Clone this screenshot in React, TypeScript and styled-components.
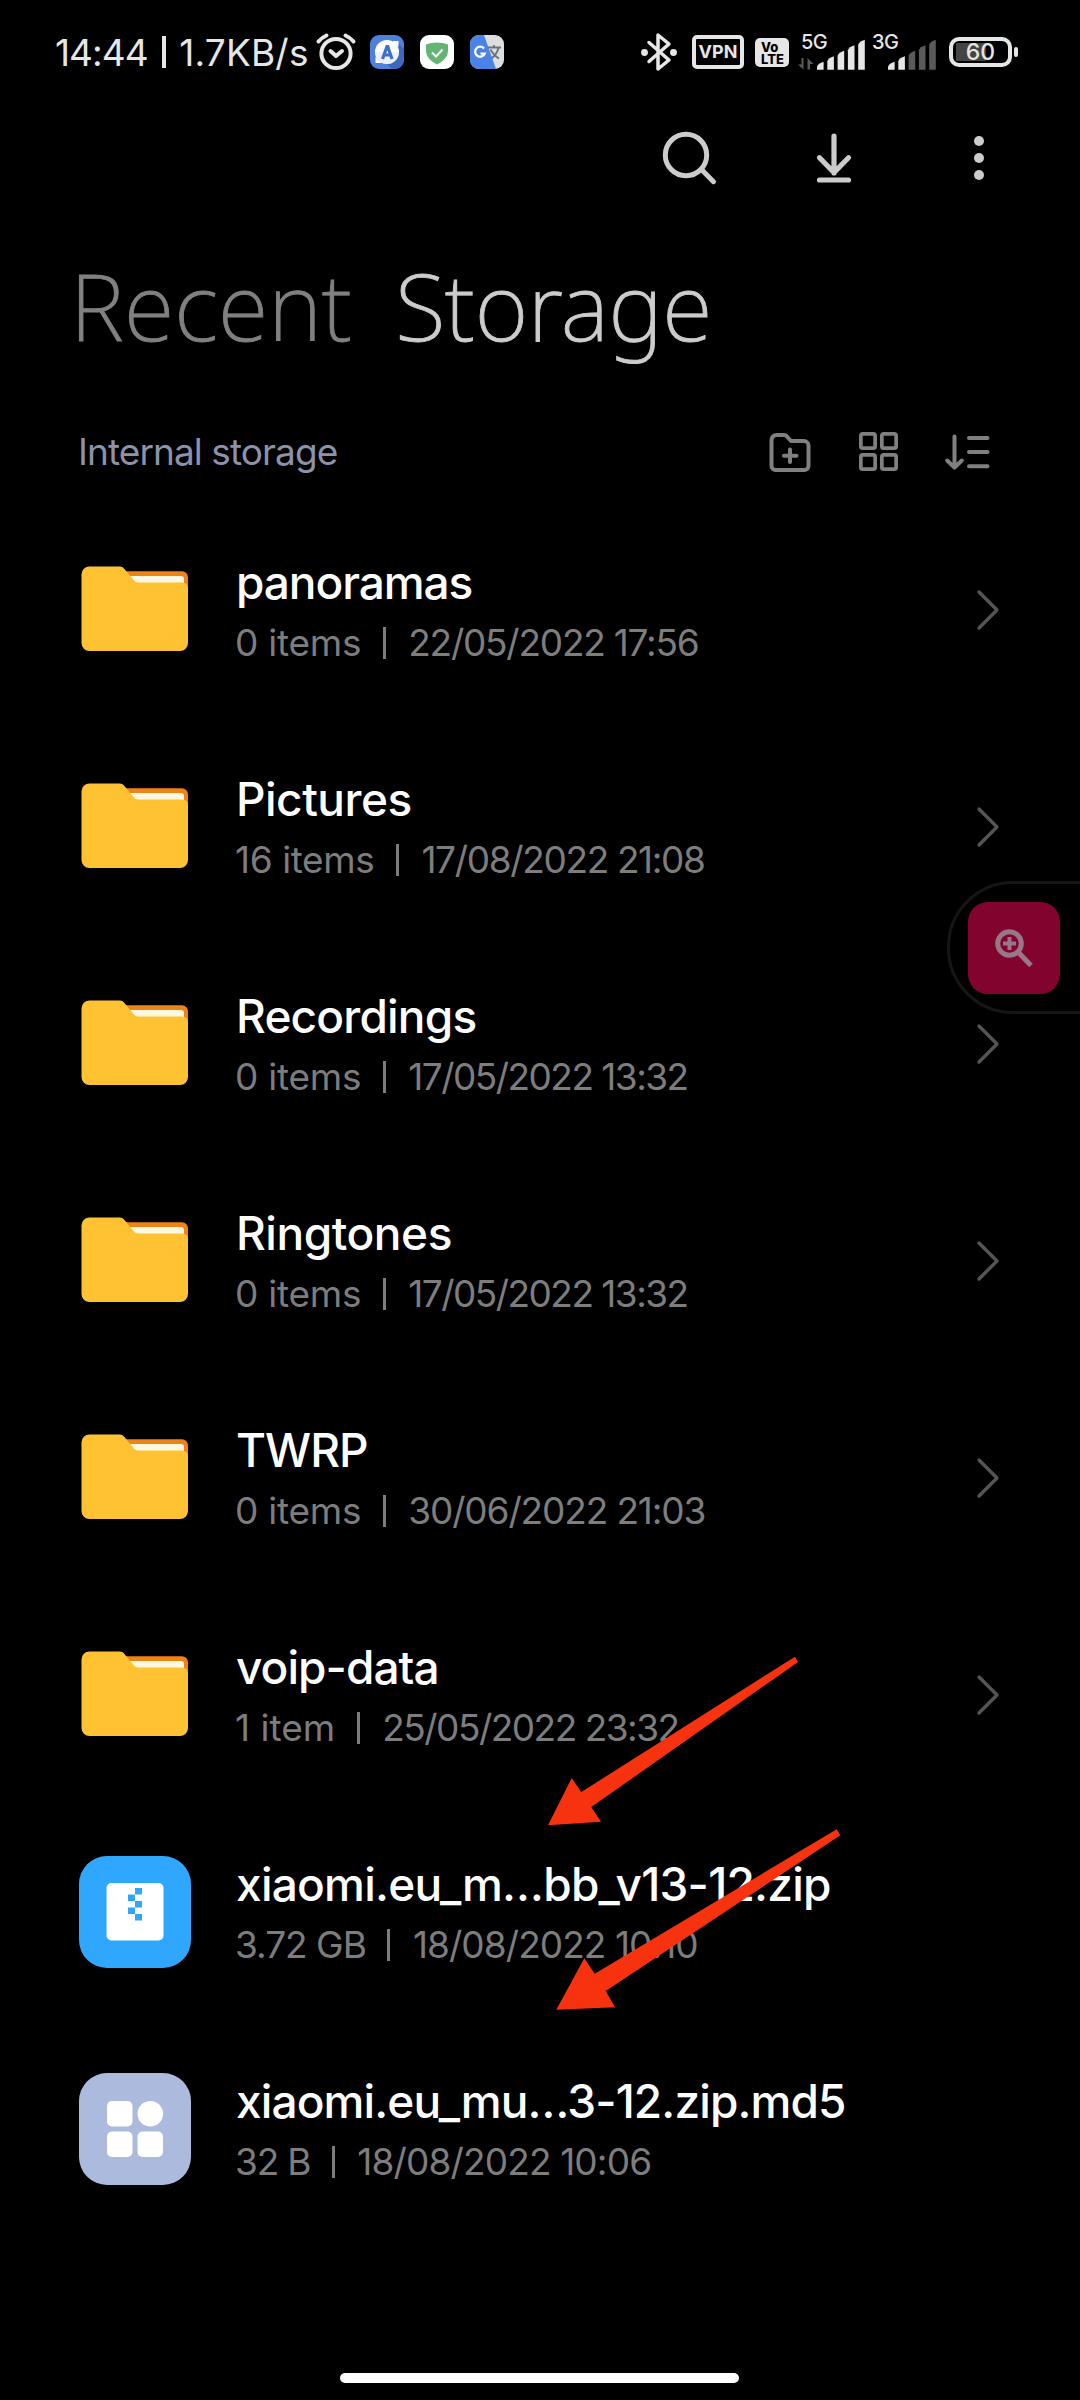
import React from 'react';
import styled, { createGlobalStyle } from 'styled-components';

const UI = '"Inter", "Roboto", sans-serif';

const GlobalStyle = createGlobalStyle`
  * { box-sizing: border-box; }
  body { margin: 0; background: #000; }
  svg { display: block; flex: none; overflow: visible; }
`;

const Screen = styled.main`
  position: relative;
  display: flex;
  flex-direction: column;
  width: 1080px;
  height: 2400px;
  overflow: hidden;
  background: #000;
  color: #fff;
  font-family: ${UI};
  white-space: nowrap;
`;

/* Status bar */
const StatusBar = styled.header`
  display: flex;
  align-items: center;
  justify-content: space-between;
  height: 104px;
  padding: 0 62px 0 55px;
  color: #e6e6e6;
`;
const StatusGroup = styled.div`
  display: flex;
  align-items: center;
`;
const StatusText = styled.span<{ $track: number }>`
  padding-top: 1px;
  font-size: 37px;
  font-weight: 430;
  line-height: 44px;
  letter-spacing: ${p => p.$track}px;
`;
const Divider = styled.i<{ $color: string; $before: number; $after: number; $thick?: number }>`
  flex: none;
  width: ${p => p.$thick ?? 3}px;
  height: 32px;
  margin: 0 ${p => p.$after}px 0 ${p => p.$before}px;
  background: ${p => p.$color};
`;
const Spaced = styled.div<{ $left: number }>`
  margin-left: ${p => p.$left}px;
`;
const VpnBadge = styled.span`
  display: flex;
  align-items: center;
  justify-content: center;
  width: 52px;
  height: 34px;
  margin-left: 15px;
  border: 4px solid #e6e6e6;
  border-radius: 5px;
  font-size: 18px;
  font-weight: 700;
  line-height: 1;
`;
const VolteBadge = styled.span`
  display: flex;
  flex-direction: column;
  width: 34px;
  height: 29px;
  margin-left: 11px;
  padding: 3px 0 0 6px;
  border-radius: 5px;
  background: #e6e6e6;
  color: #000;
  font-size: 13px;
  font-weight: 800;
  line-height: 12px;
`;
const SignalBox = styled.div<{ $left: number }>`
  display: grid;
  height: 36px;
  margin-left: ${p => p.$left}px;
  > * { grid-area: 1 / 1; }
`;
const SignalLabel = styled.span<{ $indent: number }>`
  padding-left: ${p => p.$indent}px;
  font-size: 20px;
  font-weight: 500;
  line-height: 17px;
  letter-spacing: -0.5px;
`;
const Battery = styled.div`
  display: flex;
  align-items: center;
  margin-left: 14px;
`;
const BatteryShell = styled.span`
  display: flex;
  align-items: center;
  justify-content: center;
  width: 63px;
  height: 30px;
  border: 4px solid #e6e6e6;
  border-radius: 10px;
  background: linear-gradient(90deg, #444 62%, transparent 62%) 3px 2px / 49px 18px no-repeat;
  font-size: 23px;
  font-weight: 500;
  line-height: 1;
`;
const BatteryTip = styled.i`
  width: 4px;
  height: 10px;
  margin-left: 2px;
  border-radius: 2px;
  background: #e6e6e6;
`;

/* Header */
const Toolbar = styled.div`
  display: flex;
  align-items: center;
  justify-content: flex-end;
  gap: 98px;
  height: 108px;
  padding-right: 71px;
  > :first-child { margin-right: 3px; }
`;
const Tabs = styled.nav`
  display: flex;
  align-items: center;
  height: 188px;
  padding-left: 70px;
`;
const Tab = styled.span<{ $active?: boolean; $track: number; $left?: number }>`
  margin-left: ${p => p.$left ?? 0}px;
  font-family: "Noto Sans", sans-serif;
  font-size: 92px;
  font-weight: 250;
  line-height: 120px;
  letter-spacing: ${p => p.$track}px;
  color: ${p => (p.$active ? '#cccccc' : '#808080')};
  -webkit-text-stroke: 0.9px currentColor;
`;
const PathBar = styled.div`
  display: flex;
  align-items: center;
  justify-content: space-between;
  height: 100px;
  padding: 3px 90px 0 78px;
`;
const PathName = styled.span`
  font-size: 37px;
  font-weight: 380;
  line-height: 44px;
  letter-spacing: -0.92px;
  color: #8d92ab;
`;
const ViewTools = styled.div`
  display: flex;
  align-items: center;
  gap: 47.5px;
`;

/* File list */
const List = styled.ul`
  display: grid;
  grid-auto-rows: 217px;
  margin: 0;
  padding: 0 79px 0 79px;
  list-style: none;
`;
const Row = styled.li`
  display: grid;
  grid-template-columns: 112px 1fr 24px;
  column-gap: 44px;
  align-items: start;
  padding-top: 54px;
`;
const Info = styled.div`
  display: flex;
  flex-direction: column;
  gap: 12px;
`;
const Name = styled.span<{ $track: number }>`
  padding-left: 1px;
  font-size: 46px;
  font-weight: 500;
  line-height: 56px;
  letter-spacing: ${p => p.$track}px;
`;
const Meta = styled.div`
  display: flex;
  align-items: center;
  height: 42px;
  color: #7d7d7d;
`;
const MetaText = styled.span<{ $track: number }>`
  font-size: 37px;
  font-weight: 375;
  line-height: 42px;
  letter-spacing: ${p => p.$track}px;
`;

/* Overlays */
const SideDock = styled.div`
  position: absolute;
  top: 881px;
  right: -4px;
  display: flex;
  align-items: center;
  width: 137px;
  height: 133px;
  padding-left: 18px;
  border: 3px solid #161616;
  border-radius: 66px 0 0 66px;
  background: #000;
`;
const DockButton = styled.span`
  display: flex;
  align-items: center;
  justify-content: center;
  width: 92px;
  height: 92px;
  border-radius: 20px;
  background: #83032f;
`;
const Markup = styled.svg`
  position: absolute;
  inset: 0;
  pointer-events: none;
`;
const HomeIndicator = styled.i`
  width: 399px;
  height: 10px;
  margin: auto auto 17px 340px;
  border-radius: 5px;
  background: #fff;
`;

const AlarmIcon = () => (
  <svg width="40" height="38" viewBox="0 0 40 38" fill="none" stroke="#e6e6e6" strokeWidth="4" strokeLinecap="round" strokeLinejoin="round">
    <circle cx="20" cy="20.5" r="14.6" />
    <path d="M14.5 18l5.5 5 6-5M2.5 8.5C5 5.5 7 4 10.500 2.500M37.500 8.500C35 5.500 33 4 29.500 2.500" />
  </svg>
);
const AssistIcon = () => (
  <svg width="34" height="34" viewBox="0 0 34 34">
    <rect width="34" height="34" rx="9" fill="#4e80dc" />
    <path d="M17 29L22 34H25A9 9 0 0 0 34 25V14L27 7z" fill="#3d69bd" />
    <circle cx="17" cy="17" r="12" fill="#fff" />
    <path d="M5.500 22v6h6zM28.500 12V6h-6z" fill="#fff" />
    <path d="M5 17a12 12 0 0 0 24 0z" fill="#dfe7f7" opacity="0.6" />
    <path d="M12.500 24L17 11.500h.8L22 24M14 20h7" fill="none" stroke="#3f6fcb" strokeWidth="3.200" />
  </svg>
);
const ShieldIcon = () => (
  <svg width="34" height="34" viewBox="0 0 34 34">
    <rect width="34" height="34" rx="9" fill="#fff" />
    <path d="M17 7.500c4 0 7.500.8 11 2v6c0 6.500-5 11-11 14-6-3-11-7.500-11-14v-6c3.500-1.200 7-2 11-2z" fill="#63b574" />
    <path d="M12 17.500l4 4 6.500-7" fill="none" stroke="#fff" strokeWidth="2" />
  </svg>
);
const TranslateIcon = () => (
  <svg width="34" height="34" viewBox="0 0 34 34">
    <rect width="34" height="34" rx="9" fill="#dedede" />
    <path d="M9 0h5l12 34H9a9 9 0 0 1-9-9V9a9 9 0 0 1 9-9z" fill="#4a83e6" />
    <path d="M14 13.500a5 5 0 1 0 .8 5H10.500" fill="none" stroke="#fff" strokeWidth="2.200" />
    <path d="M18 12.500h13M24 10v2.500M28.500 13c-1 4-4 8-7 10.500M20.500 14.500c2 3.500 5 7 8.500 9" fill="none" stroke="#66727a" strokeWidth="1.800" />
  </svg>
);
const BluetoothIcon = () => (
  <svg width="36" height="38" viewBox="0 0 36 38" fill="none" stroke="#e6e6e6" strokeWidth="3.500" strokeLinejoin="round" strokeLinecap="round">
    <path d="M8 9.500L28 27 17 36V2l11 9L8 28.500" />
    <circle cx="3.500" cy="19.500" r="1.700" fill="#e6e6e6" />
    <circle cx="32.500" cy="19.500" r="1.700" fill="#e6e6e6" />
  </svg>
);
function Signal({ label, level, data, left }: { label: string; level: number; data?: boolean; left: number }) {
  const x0 = data ? 19 : 16;
  return (
    <SignalBox $left={left}>
      <svg width={data ? 67 : 63} height="36" viewBox={`0 0 ${data ? 67 : 63} 36`}>
        {data && <path d="M5.500 24v11.500L0 30.500h3.500V24zM9.500 35.500V24l6 6h-3.500v5.500z" fill="#5a5a5a" />}
        {[8, 13.5, 19, 24.5, 30].map((h, i) => (
          <path
            key={h}
            transform={`translate(${x0 + i * 10.3} ${35.7 - h})`}
            d={`M0 5Q1 1.500 6.600 0V${h}H0z`}
            fill={i < level ? '#e6e6e6' : '#5a5a5a'}
          />
        ))}
      </svg>
      <SignalLabel $indent={data ? 3 : 0}>{label}</SignalLabel>
    </SignalBox>
  );
}

const SearchIcon = () => (
  <svg width="54" height="54" viewBox="0 0 54 54" fill="none" stroke="#ccc" strokeWidth="5" strokeLinecap="round">
    <circle cx="24" cy="24" r="20.700" />
    <path d="M39.500 38.500L51.500 50.700" />
  </svg>
);
const DownloadIcon = () => (
  <svg width="34" height="50" viewBox="0 0 34 50" fill="none" stroke="#ccc" strokeWidth="5.200" strokeLinecap="round" strokeLinejoin="round">
    <path d="M17 3v37M2.500 24.700L17 39.500l14.500-14.800M2.500 47h29" />
  </svg>
);
const MoreIcon = () => (
  <svg width="60" height="44" viewBox="0 0 60 44" fill="#ccc">
    <circle cx="30" cy="5" r="5" /><circle cx="30" cy="22" r="5" /><circle cx="30" cy="39" r="5" />
  </svg>
);
const NewFolderIcon = () => (
  <svg width="42" height="40" viewBox="0 0 42 40" fill="none" stroke="#808080" strokeWidth="4" strokeLinecap="round" strokeLinejoin="round">
    <path d="M2.500 8a5 5 0 0 1 5-5h7.500q1.500 0 2.500 1l4.500 5H35a4.500 4.500 0 0 1 4.500 4.500V34a4 4 0 0 1-4 4h-29a4 4 0 0 1-4-4zM21 17.500v12.500M15 23.700h12.500" />
  </svg>
);
const GridIcon = () => (
  <svg width="39" height="39" viewBox="0 0 39 39" fill="none" stroke="#808080" strokeWidth="3.700">
    <rect x="1.850" y="1.850" width="14.300" height="14.300" rx="2" /><rect x="22.850" y="1.850" width="14.300" height="14.300" rx="2" />
    <rect x="1.850" y="22.850" width="14.300" height="14.300" rx="2" /><rect x="22.850" y="22.850" width="14.300" height="14.300" rx="2" />
  </svg>
);
const SortIcon = () => (
  <svg width="45" height="36" viewBox="0 0 45 36" fill="none" stroke="#808080" strokeWidth="4" strokeLinecap="round" strokeLinejoin="round">
    <path d="M9.500 2.500v31M2.200 26.500L9.500 33.700l7.300-7.200M24 4h18.500M24 18h18.500M24 32.300h18.500" />
  </svg>
);
const FolderIcon = () => (
  <svg width="112" height="112" viewBox="0 0 112 112">
    <path d="M40 17.200h63a6 6 0 0 1 6 6v30H60z" fill="#ee8415" />
    <path d="M48 22h54a3 3 0 0 1 3 3v10H52z" fill="#fff8e0" />
    <path d="M2.500 20.500a8 8 0 0 1 8-8h30.500q2.500 0 4 2l10 12q1.500 2 4 2H103q6 0 6 6V89a8 8 0 0 1-8 8H10.500a8 8 0 0 1-8-8z" fill="#ffc233" />
  </svg>
);
const ZipIcon = () => (
  <svg width="112" height="112" viewBox="0 0 112 112">
    <rect width="112" height="112" rx="28" fill="#30a7ff" />
    <rect x="27.500" y="27" width="57" height="57.500" rx="5" fill="#fff" />
    <path d="M56 32h7v6.500h-7zM49 38.500h7V45h-7zM56 45h7v6.500h-7zM49 51.500h7V58h-7zM56 58h7v6.500h-7z" fill="#30a7ff" />
  </svg>
);
const AppFileIcon = () => (
  <svg width="112" height="112" viewBox="0 0 112 112">
    <rect width="112" height="112" rx="28" fill="#acbadd" />
    <g fill="#fff">
      <rect x="28" y="28" width="25.500" height="25.500" rx="5" /><circle cx="71.300" cy="40.700" r="12.800" />
      <rect x="28" y="58.500" width="25.500" height="25.500" rx="5" /><rect x="58.500" y="58.500" width="25.500" height="25.500" rx="5" />
    </g>
  </svg>
);
const Chevron = () => (
  <svg width="24" height="112" viewBox="0 0 24 112" fill="none" stroke="#555" strokeWidth="3.300" strokeLinecap="round" strokeLinejoin="round">
    <path d="M2 38l18 18-18 18" />
  </svg>
);
const ZoomIcon = () => (
  <svg width="40" height="40" viewBox="0 0 40 40" fill="none" stroke="#96788a" strokeWidth="5">
    <circle cx="15.500" cy="15.500" r="11.800" />
    <path d="M24 24l13 13.500" /><path d="M15.500 9v13M9 15.500h13" strokeWidth="4" />
  </svg>
);

type Kind = 'folder' | 'zip' | 'app';
interface Entry {
  kind: Kind;
  name: string;
  size: string;
  date: string;
  /* letter-spacing of name, size and date */
  track: [number, number, number];
}
const entries: Entry[] = [
  { kind: 'folder', name: 'panoramas', size: '0 items', date: '22/05/2022 17:56', track: [-1.08, -0.25, -1.23] },
  { kind: 'folder', name: 'Pictures', size: '16 items', date: '17/08/2022 21:08', track: [-0.5, -0.4, -1.35] },
  { kind: 'folder', name: 'Recordings', size: '0 items', date: '17/05/2022 13:32', track: [-0.8, -0.25, -1.53] },
  { kind: 'folder', name: 'Ringtones', size: '0 items', date: '17/05/2022 13:32', track: [-0.45, -0.25, -1.53] },
  { kind: 'folder', name: 'TWRP', size: '0 items', date: '30/06/2022 21:03', track: [-1, -0.25, -1.13] },
  { kind: 'folder', name: 'voip-data', size: '1 item', date: '25/05/2022 23:32', track: [-0.95, 0, -1.5] },
  { kind: 'zip', name: 'xiaomi.eu_m…bb_v13-12.zip', size: '3.72 GB', date: '18/08/2022 10:10', track: [-0.75, -1, -0.93] },
  { kind: 'app', name: 'xiaomi.eu_mu…3-12.zip.md5', size: '32 B', date: '18/08/2022 10:06', track: [-0.88, -1.2, -0.85] },
];
const icons: Record<Kind, React.FC> = { folder: FolderIcon, zip: ZipIcon, app: AppFileIcon };

export default function App() {
  return (
    <Screen>
      <GlobalStyle />
      <StatusBar>
        <StatusGroup>
          <StatusText $track={-0.95}>14:44</StatusText>
          <Divider $color="#e6e6e6" $before={14.5} $after={13} $thick={4} />
          <StatusText $track={0.2}>1.7KB/s</StatusText>
          <Spaced $left={7}><AlarmIcon /></Spaced>
          <Spaced $left={14}><AssistIcon /></Spaced>
          <Spaced $left={16}><ShieldIcon /></Spaced>
          <Spaced $left={16}><TranslateIcon /></Spaced>
        </StatusGroup>
        <StatusGroup>
          <BluetoothIcon />
          <VpnBadge>VPN</VpnBadge>
          <VolteBadge><span>Vo</span><span>LTE</span></VolteBadge>
          <Signal label="5G" level={5} data left={9} />
          <Signal label="3G" level={2} left={7} />
          <Battery><BatteryShell>60</BatteryShell><BatteryTip /></Battery>
        </StatusGroup>
      </StatusBar>
      <Toolbar><SearchIcon /><DownloadIcon /><MoreIcon /></Toolbar>
      <Tabs>
        <Tab $track={0.1}>Recent</Tab>
        <Tab $track={-0.35} $left={43} $active>Storage</Tab>
      </Tabs>
      <PathBar>
        <PathName>Internal storage</PathName>
        <ViewTools><NewFolderIcon /><GridIcon /><SortIcon /></ViewTools>
      </PathBar>
      <List>
        {entries.map(e => {
          const Icon = icons[e.kind];
          return (
            <Row key={e.name}>
              <Icon />
              <Info>
                <Name $track={e.track[0]}>{e.name}</Name>
                <Meta>
                  <MetaText $track={e.track[1]}>{e.size}</MetaText>
                  <Divider $color="#7d7d7d" $before={21.5} $after={22.5} />
                  <MetaText $track={e.track[2]}>{e.date}</MetaText>
                </Meta>
              </Info>
              {e.kind === 'folder' && <Chevron />}
            </Row>
          );
        })}
      </List>
      <SideDock><DockButton><ZoomIcon /></DockButton></SideDock>
      <Markup width="1080" height="2400" viewBox="0 0 1080 2400" fill="#f7330f">
        <path d="M795 1656.700L798 1662 591.300 1807 601 1821.700 548 1825.300 571.700 1778 581.300 1792z" />
        <path d="M836.700 1829.300L840.300 1835.300 605.700 1991 615 2007.300 556.300 2009.700 584.300 1958.300 594.700 1973.700z" />
      </Markup>
      <HomeIndicator />
    </Screen>
  );
}
